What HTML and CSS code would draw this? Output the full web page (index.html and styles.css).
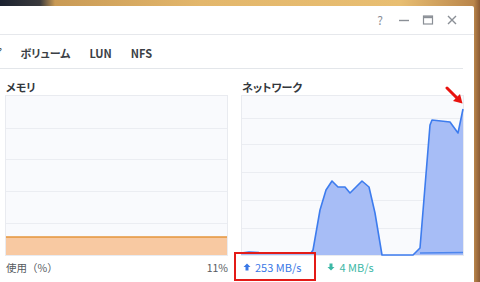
FILE: index.html
```html
<!DOCTYPE html>
<html lang="ja">
	<head>
		<meta charset="UTF-8" />
		<meta name="viewport" content="width=device-width, initial-scale=1.0" />
		<title>リソースモニタ</title>
		<link rel="stylesheet" href="styles.css">
	</head>
	<body>
		<div class="win">
			<div class="titlebar">
				<span class="tb-btn help">?</span>
				<svg class="tb-btn" width="12" height="12" viewBox="0 0 12 12"><path d="M1 6.5h10" stroke="#8a8f96" stroke-width="1.4"/></svg>
				<svg class="tb-btn" width="12" height="12" viewBox="0 0 12 12"><rect x="1.5" y="2" width="9" height="8" fill="none" stroke="#8a8f96" stroke-width="1.2"/><path d="M1.5 3.2h9" stroke="#8a8f96" stroke-width="2"/></svg>
				<svg class="tb-btn" width="12" height="12" viewBox="0 0 12 12"><path d="M2 2l8 8M10 2l-8 8" stroke="#8a8f96" stroke-width="1.4"/></svg>
			</div>

			<div class="tabs">
				<span class="tab cut">グループ</span>
				<span class="tab">ボリューム</span>
				<span class="tab">LUN</span>
				<span class="tab">NFS</span>
			</div>

			<div class="panels">
				<div class="panel">
					<div class="panel-title">メモリ</div>
					<svg class="chart" width="223" height="161" viewBox="0 0 223 161">
						<rect x="0.5" y="0.5" width="222" height="160" fill="#f9fafd" stroke="#e9ebf0"/>
						<path d="M1 33.5h221M1 64.5h221M1 96.5h221M1 128.5h221" stroke="#ebedf2"/>
						<rect x="1" y="142" width="221" height="18" fill="#f8c9a2"/>
						<path d="M1 142h221" stroke="#e5953b" stroke-width="1.6"/>
					</svg>
					<div class="foot">
						<span class="label">使用（%）</span>
						<span>11%</span>
					</div>
				</div>

				<div class="panel">
					<div class="panel-title">ネットワーク</div>
					<svg class="chart" width="223" height="161" viewBox="0 0 223 161">
						<rect x="0.5" y="0.5" width="222" height="160" fill="#f9fafd" stroke="#e9ebf0"/>
						<path d="M1 23.5h221M1 49.5h221M1 77.5h221M1 105.5h221M1 133.5h221" stroke="#ebedf2"/>
						<!-- upload -->
						<path d="M0 158 L8 157 L18 157.5 L70 158 L72 155 L79 115 L85 95 L91 86 L97 92 L104 92 L109 98 L121 86 L128 92 L134 118 L141 160 L172 160 L179 153 L189 30 L191 25 L209 27 L217 38 L222 14 L222 160 L0 160 Z" fill="#a7bdf6"/>
						<path d="M0 158 L8 157 L18 157.5 L70 158 L72 155 L79 115 L85 95 L91 86 L97 92 L104 92 L109 98 L121 86 L128 92 L134 118 L141 160 L172 160 L179 153 L189 30 L191 25 L209 27 L217 38 L222 14" fill="none" stroke="#3d7cee" stroke-width="1.6" stroke-linejoin="round"/>
						<path d="M179 158 L222 157.5" stroke="#4d86ee" stroke-width="1.4"/>
					</svg>
					<div class="foot legend">
						<span class="up">
							<svg width="8" height="8" viewBox="0 0 8 8"><path d="M4 0.5L7.5 4H5.5V7.5H2.5V4H0.5Z" fill="#3a78e6"/></svg>
							253 MB/s
						</span>
						<span class="down">
							<svg width="8" height="8" viewBox="0 0 8 8"><path d="M4 7.5L7.5 4H5.5V0.5H2.5V4H0.5Z" fill="#3cb8a6"/></svg>
							4 MB/s
						</span>
					</div>
				</div>
			</div>
		</div>

		<!-- annotations drawn over the screenshot -->
		<div class="mark-box"></div>
		<svg class="mark-arrow" width="20" height="20" viewBox="0 0 20 20">
			<path d="M2 2L13 13" stroke="#e8120e" stroke-width="3" stroke-linecap="round"/>
			<path d="M17.5 17.5L8 15L15 8Z" fill="#e8120e"/>
		</svg>
	</body>
</html>
```

FILE: styles.css
```css
body {
	margin: 0;
	width: 480px;
	height: 282px;
	overflow: hidden;
	position: relative;
	font-family: "Noto Sans CJK JP", "Noto Sans", sans-serif;
	font-feature-settings: "palt";
	background:
		linear-gradient(90deg, #1b2230 0, #3a3a3c 40px, #c99a55 55px, #e3b76c 200px, #e8be72 400px, #b9854a 474px, #8a5a34 480px);
}
.win {
	margin-top: 6px;
	width: 474px;
	height: 276px;
	background: #fff;
	border-top-right-radius: 2px;
	color: #333;
}
.titlebar {
	height: 28px;
	display: flex;
	align-items: center;
	justify-content: flex-end;
	gap: 12px;
	padding-right: 16px;
	border-bottom: 1px solid #e6e8ec;
}
.tb-btn {
	display: block;
}
.help {
	font-size: 12px;
	color: #8a8f96;
	width: 12px;
	text-align: center;
	line-height: 12px;
}
.tabs {
	height: 30px;
	padding-top: 3px;
	display: flex;
	align-items: center;
	gap: 19px;
	margin-right: 11px;
	border-bottom: 1px solid #e3e6ea;
	font-size: 11px;
	font-weight: bold;
	color: #3b3f45;
	overflow: hidden;
}
.tab.cut {
	margin-left: -40px;
}
.panels {
	display: grid;
	grid-template-columns: 223px 223px;
	column-gap: 13px;
	padding-left: 5px;
}
.panel-title {
	height: 26px;
	padding-left: 1px;
	font-size: 11px;
	font-weight: bold;
	color: #33373c;
	line-height: 36px;
}
.chart {
	display: block;
}
.foot {
	display: flex;
	justify-content: space-between;
	height: 22px;
	align-items: center;
	padding-left: 1px;
	font-size: 10.5px;
	color: #555a60;
}
.foot .label {
	font-feature-settings: normal;
}
.legend {
	justify-content: flex-start;
	gap: 26px;
	padding-left: 2px;
	font-size: 11px;
}
.legend span {
	display: flex;
	align-items: center;
	gap: 4px;
}
.up {
	color: #3a78e6;
}
.down {
	color: #3cb8a6;
}
.mark-box {
	position: absolute;
	left: 234px;
	top: 252px;
	width: 78px;
	height: 25px;
	border: 2px solid #e31b17;
}
.mark-arrow {
	position: absolute;
	left: 445px;
	top: 86px;
}
```
